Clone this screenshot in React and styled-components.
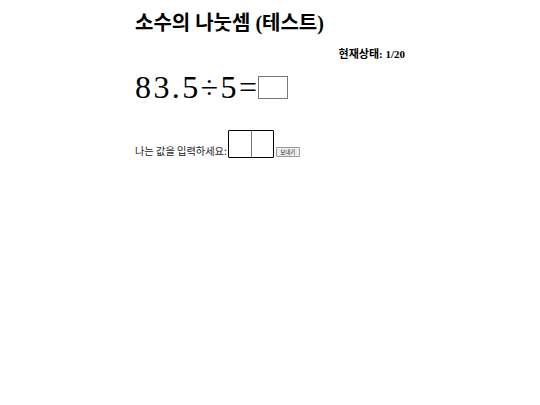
import React from "react";
import styled, { createGlobalStyle } from "styled-components";

const GlobalStyle = createGlobalStyle`
  body {
    margin: 0;
    background: #fff;
    color: #000;
    font-family: "Liberation Serif", "Noto Sans CJK KR", serif;
  }
`;

const Page = styled.div`
  width: 270px;
  margin: 0 auto;
  padding-top: 10px;
`;

const Title = styled.h1`
  margin: 0;
  font-size: 20px;
  font-weight: 700;
  line-height: 26px;
`;

const Status = styled.div`
  margin-top: 9px;
  text-align: right;
  font-size: 11px;
  font-weight: 700;
`;

const Equation = styled.div`
  display: flex;
  align-items: center;
  margin-top: 8px;
  font-family: "Liberation Serif", serif;
  font-size: 32px;
  height: 36px;
`;

const Sym = styled.span`
  margin-right: ${(p) => p.gap}px;
`;

const AnswerBox = styled.span`
  display: inline-block;
  width: 28px;
  height: 21px;
  border: 1px solid #777;
`;

const InputRow = styled.div`
  display: flex;
  align-items: flex-end;
  margin-top: 25px;
  font-family: "Noto Sans CJK KR", "Liberation Sans", sans-serif;
  font-size: 10.2px;
`;

const Label = styled.span`
  margin-right: 1px;
  color: #222;
`;

const Cells = styled.div`
  display: flex;
  border: 1px solid #000;
  border-radius: 1px;
`;

const Cell = styled.input`
  width: 22px;
  height: 26px;
  box-sizing: border-box;
  border: none;
  padding: 0;
  outline: none;
  & + & {
    border-left: 1px solid #777;
  }
`;

const SendButton = styled.button`
  margin-left: 2px;
  margin-bottom: 1px;
  height: 10px;
  width: 24px;
  padding: 0;
  font-size: 5.5px;
  line-height: 8px;
  font-family: "Noto Sans CJK KR", sans-serif;
  background: #efefef;
  border: 1px solid #999;
  border-radius: 1px;
  color: #222;
`;

export default function App() {
  const parts = ["8", "3", ".", "5", "÷", "5", "="];
  return (
    <>
      <GlobalStyle />
      <Page>
        <Title>소수의 나눗셈 (테스트)</Title>
        <Status>현재상태: 1/20</Status>
        <Equation>
          {parts.map((s, i) => (
            <Sym key={i} gap={i === parts.length - 1 ? 1.5 : 2.4}>
              {s}
            </Sym>
          ))}
          <AnswerBox />
        </Equation>
        <InputRow>
          <Label>나는 값을 입력하세요:</Label>
          <Cells>
            <Cell />
            <Cell />
          </Cells>
          <SendButton>보내기</SendButton>
        </InputRow>
      </Page>
    </>
  );
}
